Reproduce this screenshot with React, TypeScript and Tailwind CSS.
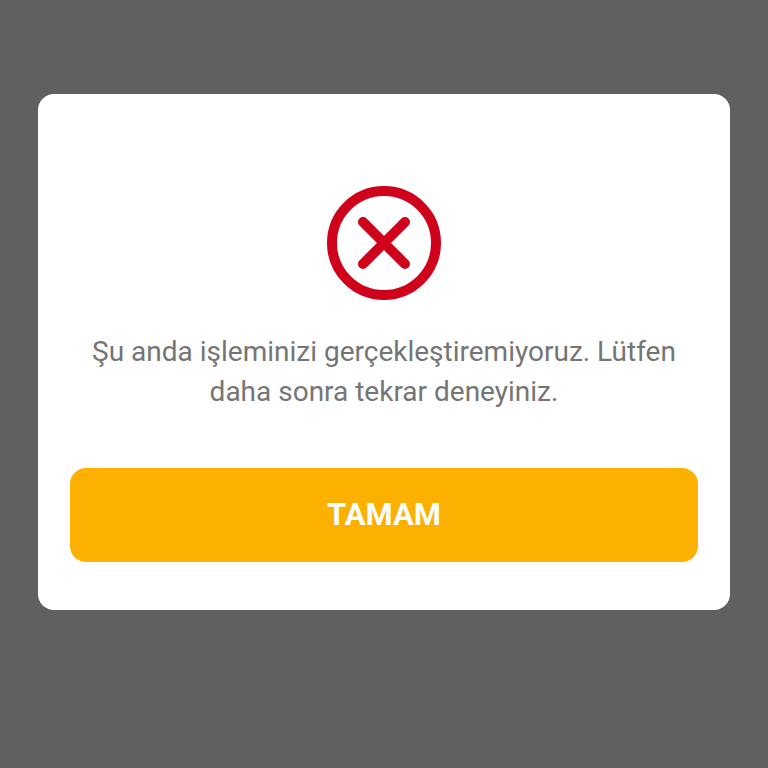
import { useState } from 'react';

function ErrorIcon() {
  return (
    <svg viewBox="0 0 114 114" fill="none" stroke="#d0021b" className="size-[114px]" aria-hidden="true">
      <circle cx="57" cy="57" r="52" strokeWidth="10" />
      <path d="M36 36l42 42M78 36L36 78" strokeWidth="10" strokeLinecap="round" />
    </svg>
  );
}

interface ErrorDialogProps {
  message: string;
  onConfirm: () => void;
}

function ErrorDialog({ message, onConfirm }: ErrorDialogProps) {
  return (
    <div
      role="alertdialog"
      aria-modal="true"
      aria-describedby="dialog-message"
      className="flex w-full flex-col items-center rounded-2xl bg-white px-8 pt-[92px] pb-12"
    >
      <ErrorIcon />
      <p id="dialog-message" className="mt-8 text-center text-[28px] leading-10 text-[#757575]">
        {message}
      </p>
      <button
        type="button"
        onClick={onConfirm}
        className="mt-14 h-[94px] w-full rounded-2xl bg-[#fcb000] text-[31px] font-bold text-white"
      >
        TAMAM
      </button>
    </div>
  );
}

export default function App() {
  const [open, setOpen] = useState(true);

  return (
    <main className="min-h-screen bg-[#61605e] px-[38px] pt-[94px] pb-12 font-[Roboto,sans-serif]">
      {open && (
        <ErrorDialog
          message="Şu anda işleminizi gerçekleştiremiyoruz. Lütfen daha sonra tekrar deneyiniz."
          onConfirm={() => setOpen(false)}
        />
      )}
    </main>
  );
}
